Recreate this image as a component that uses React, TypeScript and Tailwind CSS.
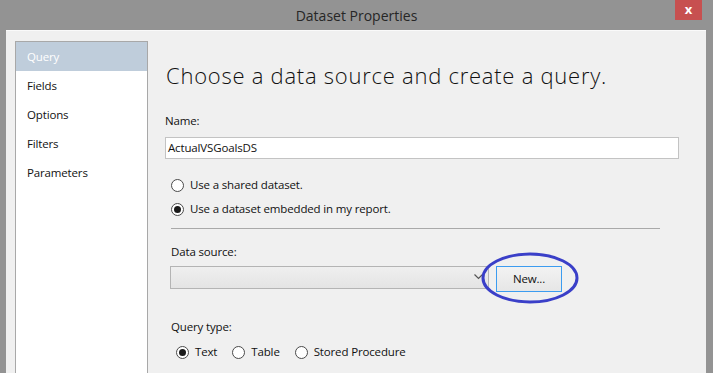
const font = { fontFamily: '"Open Sans", "Noto Sans", sans-serif' };

function Radio({ checked }: { checked?: boolean }) {
  return (
    <span className="flex h-[13px] w-[13px] shrink-0 items-center justify-center rounded-full border border-[#4a4a4a] bg-white">
      {checked && <span className="h-[7px] w-[7px] rounded-full bg-[#1a1a1a]" />}
    </span>
  );
}

const pages = ['Query', 'Fields', 'Options', 'Filters', 'Parameters'];

export default function App() {
  return (
    <div
      className="flex h-[373px] w-[713px] flex-col overflow-hidden bg-[#939393] text-[11.5px] tracking-[-0.15px] text-[#111]"
      style={font}
    >
      {/* title bar */}
      <div className="relative flex h-[30px] shrink-0 items-center justify-center">
        <span className="text-[14px] tracking-normal text-[#262626]">Dataset Properties</span>
        <div className="absolute right-[11px] top-0 flex h-[20px] w-[27px] items-center justify-center bg-[#c75050] text-[13px] font-bold text-white">
          x
        </div>
      </div>

      {/* body */}
      <div className="ml-[6px] mr-[7px] flex flex-1 border-t border-[#fafafa] bg-[#f0f0f0]">
        {/* page list */}
        <div className="ml-[9px] mt-[10px] w-[133px] border border-b-0 border-[#a8a8a8] bg-white">
          {pages.map((p, i) => (
            <div
              key={p}
              className={
                i === 0
                  ? 'flex h-[29px] items-center bg-[#bfcddb] pl-[11px] text-white'
                  : 'flex h-[29px] items-center pl-[11px] text-[#111]'
              }
            >
              {p}
            </div>
          ))}
        </div>

        {/* content */}
        <div className="flex flex-1 flex-col pl-[17px] pr-[27px]">
          <h1 className="ml-[1px] mt-[30px] text-[22px] font-light leading-[28px] tracking-[0.75px] text-[#111]">
            Choose a data source and create a query.
          </h1>

          <div className="mt-[24px] leading-[16px]">Name:</div>
          <div className="mt-[8px] flex h-[22px] items-center border border-[#c3c3c3] bg-white pl-[2px]">
            ActualVSGoalsDS
          </div>

          <div className="ml-[6px] mt-[19px] flex flex-col gap-[10px]">
            <label className="flex h-[14px] items-center gap-[6px]">
              <Radio />
              Use a shared dataset.
            </label>
            <label className="flex h-[14px] items-center gap-[6px]">
              <Radio checked />
              Use a dataset embedded in my report.
            </label>
          </div>

          <div className="ml-[6px] mr-[19px] mt-[12px] h-px bg-[#a9a9a9]" />

          <div className="ml-[6px] mt-[15px] leading-[16px]">Data source:</div>
          <div className="ml-[5px] mt-[3px] flex items-center">
            <div className="relative h-[23px] w-[319px] border border-[#b4b4b4] bg-gradient-to-b from-[#efefef] to-[#e4e4e4]">
              <svg className="absolute right-[5px] top-[7px]" width="9" height="6" viewBox="0 0 9 6">
                <path d="M0.5 0.5 L4.5 4.5 L8.5 0.5" fill="none" stroke="#555" strokeWidth="1.2" />
              </svg>
            </div>
            <div className="relative ml-[7px] mt-[3px]">
              <button className="flex h-[26px] w-[66px] items-center justify-center border border-[#3c9cf0] bg-gradient-to-b from-[#f2f2f2] to-[#e6e6e6] text-[#111]">
                New...
              </button>
              <svg
                className="pointer-events-none absolute left-[-15px] top-[-14px]"
                width="98"
                height="52"
                viewBox="0 0 98 52"
              >
                <ellipse cx="49" cy="26" rx="47" ry="24" fill="none" stroke="#3a3fc8" strokeWidth="3" />
              </svg>
            </div>
          </div>

          <div className="ml-[6px] mt-[27px] leading-[16px]">Query type:</div>
          <div className="ml-[11px] mt-[10px] flex h-[14px] items-center">
            <Radio checked />
            <span className="ml-[6px]">Text</span>
            <span className="ml-[15px]"><Radio /></span>
            <span className="ml-[6px]">Table</span>
            <span className="ml-[15px]"><Radio /></span>
            <span className="ml-[6px]">Stored Procedure</span>
          </div>
        </div>
      </div>
    </div>
  );
}
